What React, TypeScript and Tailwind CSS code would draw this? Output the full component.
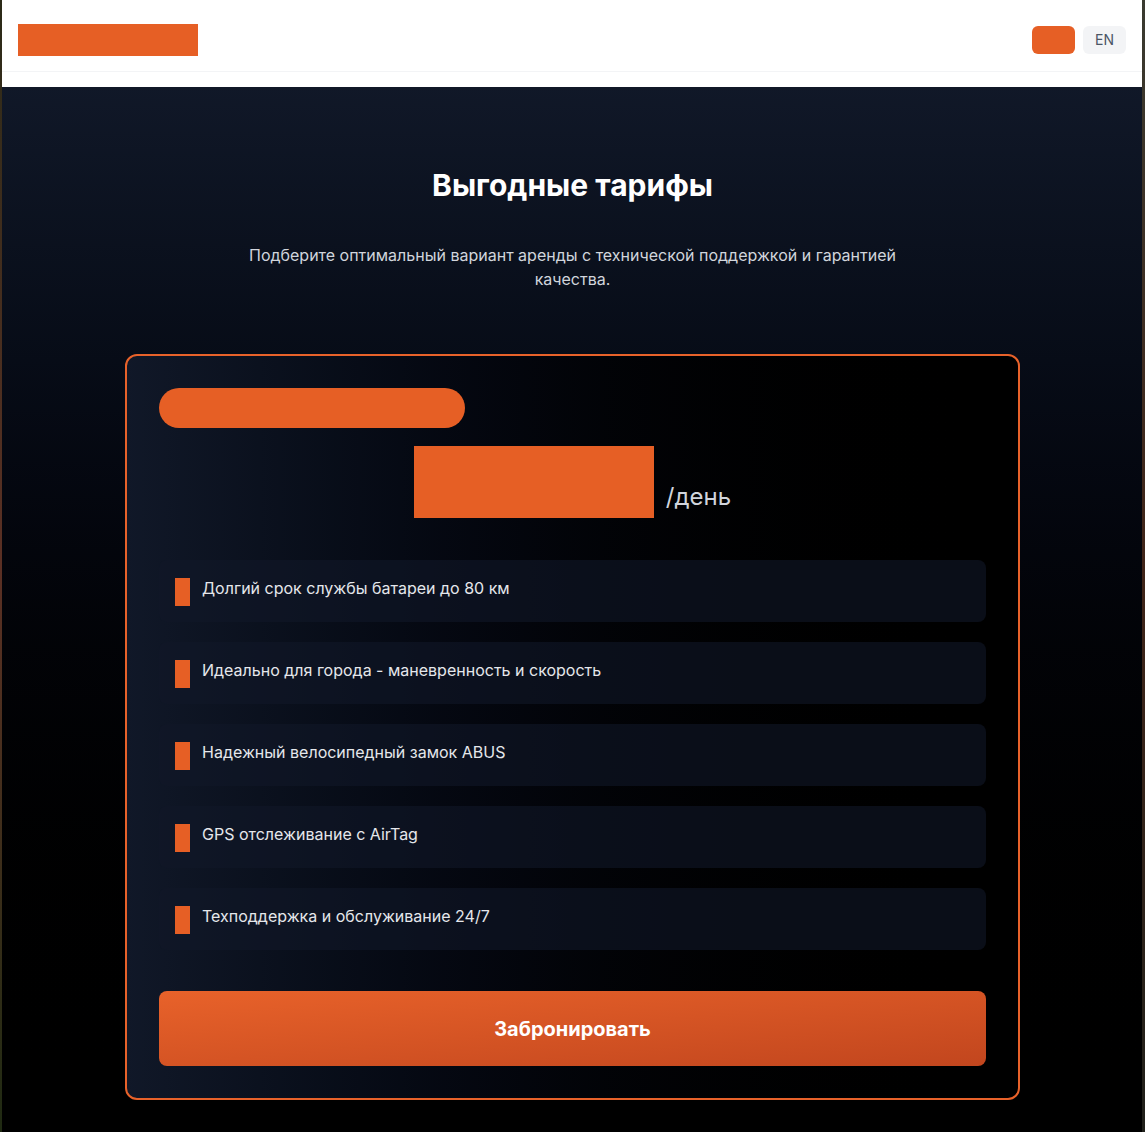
const features = [
  'Долгий срок службы батареи до 80 км',
  'Идеально для города - маневренность и скорость',
  'Надежный велосипедный замок ABUS',
  'GPS отслеживание с AirTag',
  'Техподдержка и обслуживание 24/7',
];

function Header() {
  return (
    <>
      <header className="flex h-[72px] items-center justify-between border-b border-gray-100 bg-white px-4 pt-2">
        <div className="h-8 w-[180px] bg-[#e65f25]" />
        <div className="flex items-center gap-2">
          <div className="h-7 w-[43px] rounded-md bg-[#e65f25]" />
          <button className="h-7 w-[43px] rounded-md bg-gray-100 text-sm text-gray-600">EN</button>
        </div>
      </header>
      <div className="h-[15px] bg-white" />
    </>
  );
}

function FeatureRow({ text }: { text: string }) {
  return (
    <li className="flex items-start gap-3 rounded-lg bg-gray-900/60 p-4">
      <span className="mt-[2px] h-7 w-[15px] shrink-0 bg-[#e65f25]" />
      <span className="text-base leading-6 text-gray-200">{text}</span>
    </li>
  );
}

function PricingCard() {
  return (
    <div className="mx-auto mt-[63px] max-w-[895px] rounded-xl border-2 border-[#e8622a] bg-gradient-to-r from-gray-900 to-black p-8">
      <div className="h-10 w-[306px] rounded-full bg-[#e65f25]" />
      <div className="mt-[18px] flex items-end justify-center gap-3">
        <div className="h-[72px] w-[240px] bg-[#e65f25]" />
        <span className="mb-[5px] text-2xl text-gray-300">/день</span>
      </div>
      <ul className="mt-[42px] flex flex-col gap-5">
        {features.map((f) => (
          <FeatureRow key={f} text={f} />
        ))}
      </ul>
      <button className="mt-[41px] h-[75px] w-full rounded-lg bg-gradient-to-br from-[#e8622a] to-[#c2461e] text-xl font-bold text-white">
        Забронировать
      </button>
    </div>
  );
}

export default function App() {
  return (
    <div className="flex min-h-[1132px] bg-[#15160e] font-['Inter',sans-serif]">
      <div className="w-[2px] shrink-0 bg-gradient-to-b from-[#2b2a18] via-[#5b3024] to-[#1f2a12]" />
      <div className="min-w-0 flex-1">
        <Header />
        <section className="bg-gradient-to-b from-gray-900 to-black pb-8 pl-[17px] pr-4 pt-20">
          <h2 className="text-center text-3xl font-bold text-white">Выгодные тарифы</h2>
          <p className="mx-auto mt-10 max-w-2xl text-center text-base leading-6 text-gray-300">
            Подберите оптимальный вариант аренды с технической поддержкой и гарантией качества.
          </p>
          <PricingCard />
        </section>
      </div>
      <div className="w-[3px] shrink-0 bg-gradient-to-b from-[#3a3a30] via-[#402418] to-[#20201a]" />
    </div>
  );
}
